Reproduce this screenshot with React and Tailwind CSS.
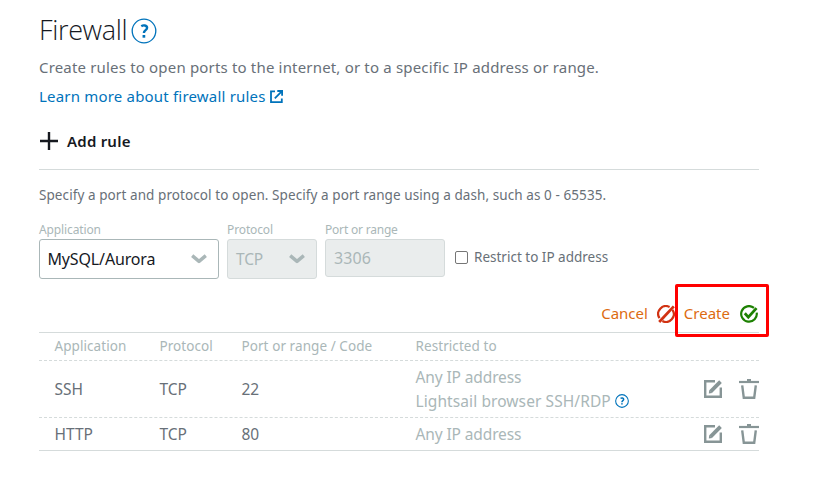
import React from "react";

function HelpIcon({ size, stroke, mark }) {
  return (
    <svg width={size} height={size} viewBox="0 0 26 26" fill="none" stroke="#0073bb" className="shrink-0">
      <circle cx="13" cy="13" r="11.8" strokeWidth={stroke} />
      <path d="M10.3 8.2c1.8-1.2 5.8-1.2 5.8 1.6 0 2.5-3.2 2.3-3.2 5.3" strokeWidth={mark} />
      <path d="M12.9 17v2.7" strokeWidth={mark + 0.3} />
    </svg>
  );
}

function ExternalIcon() {
  return (
    <svg width="13" height="13" viewBox="0 0 13 13" fill="none" stroke="#0073bb" strokeWidth="1.8" className="shrink-0">
      <path d="M5 1.4H1v10.7h10.8V8.5" />
      <path d="M4.8 8.3 11.5 1.6M7.3 1h4.8v4.8" />
    </svg>
  );
}

function Chevron() {
  return (
    <svg width="16" height="10" viewBox="0 0 16 10" fill="none" stroke="#aab7b8" strokeWidth="3.4" strokeLinejoin="round" className="shrink-0">
      <path d="M1.2 1.6 8 7.4l6.8-5.8" />
    </svg>
  );
}

function CancelIcon() {
  return (
    <svg width="18" height="18" viewBox="0 0 18 18" fill="none" stroke="#d13212" strokeWidth="2.2" className="shrink-0">
      <path d="M12.6 2A7.8 7.8 0 0 0 2.5 13.2M5.4 16A7.8 7.8 0 0 0 15.5 4.8" />
      <path d="M2.2 17 16.8 1.4" strokeWidth="2.8" />
    </svg>
  );
}

function CheckIcon() {
  return (
    <svg width="18" height="18" viewBox="0 0 18 18" fill="none" stroke="#1d8102" className="shrink-0">
      <path d="M14 2.9A7.8 7.8 0 1 0 16.7 7.6" strokeWidth="2.2" />
      <path d="m4.8 8.3 3.5 3.8 8.2-9" strokeWidth="2.8" />
    </svg>
  );
}

function EditIcon() {
  return (
    <svg width="18" height="18" viewBox="0 0 18 18" fill="none" stroke="#879596" className="shrink-0">
      <path d="M11 1.2H1.2v15.6h15.6V7.5" strokeWidth="2.4" />
      <path d="m6.6 11.6 9.9-9.9" strokeWidth="3.8" />
      <path d="m4.8 13.5.5-3.4 2.9 2.9z" fill="#879596" stroke="none" />
    </svg>
  );
}

function TrashIcon() {
  return (
    <svg width="20" height="20" viewBox="0 0 20 20" fill="none" stroke="#879596" className="shrink-0">
      <path d="M0 3h20" strokeWidth="2.2" />
      <path d="M8 1h4" strokeWidth="2" />
      <path d="M3.2 6.3 4.8 18.8h10.4l1.6-12.5" strokeWidth="2.4" />
    </svg>
  );
}

const COLS = "grid grid-cols-[105px_82px_174px_1fr]";

function Cell({ children }) {
  return <div className="flex items-center pl-[15.5px]">{children}</div>;
}

function Rule({ app, port, height, border, children }) {
  return (
    <div className={`${COLS} ${height} ${border} border-[#d5dbdb] text-[15.5px] text-[#687078]`}>
      <div className="flex items-center pt-0.5 pl-[15.5px]">{app}</div>
      <div className="flex items-center pt-0.5 pl-[15.5px]">TCP</div>
      <div className="flex items-center pt-0.5 pl-[15.5px]">{port}</div>
      <div className="flex items-center justify-between pl-[15.5px]">
        <div className="text-[15.5px] leading-6 text-[#aab7b8]">{children}</div>
        <div className="flex items-center gap-[17px]">
          <EditIcon />
          <TrashIcon />
        </div>
      </div>
    </div>
  );
}

export default function App() {
  return (
    <main className="h-[481px] w-[818px] overflow-hidden bg-white pl-[39px] font-['Noto_Sans',sans-serif] whitespace-nowrap text-[#687078]">
      <div className="w-[720px]">
        <header className="flex h-[54px] items-center gap-1 pt-[7px]">
          <h1 className="font-['Open_Sans','Noto_Sans',sans-serif] text-[27px] font-light tracking-[-0.35px] text-[#16191f]">Firewall</h1>
          <HelpIcon size={26} stroke={1.3} mark={2.4} />
        </header>
        <p className="h-7 text-[15px] leading-[27px] tracking-[0.175px]">Create rules to open ports to the internet, or to a specific IP address or range.</p>
        <a className="flex h-7 items-center gap-1 text-[15px] tracking-[0.19px] text-[#0073bb]">
          Learn more about firewall rules
          <ExternalIcon />
        </a>
        <button className="flex h-[59px] items-center gap-2 pt-[3px] text-[15px] font-semibold tracking-[0.22px] text-[#16191f]">
          <svg width="20" height="20" viewBox="0 0 20 20" stroke="#16191f" strokeWidth="2.4">
            <path d="M1 10h18M10 1v18" />
          </svg>
          Add rule
        </button>
        <section className="border-t border-[#d5dbdb]">
          <p className="h-[52px] text-[13.5px] leading-[51px] tracking-[0.08px]">Specify a port and protocol to open. Specify a port range using a dash, such as 0 - 65535.</p>
          <div className="flex h-[75px] gap-2">
            <label className="w-[180px] text-[12px] leading-[17px] tracking-[-0.12px] text-[#aab7b8]">
              <div className="-mt-px mb-px">Application</div>
              <div className="flex h-10 items-center justify-between rounded-[3px] border border-[#aab7b8] pr-[11px] pl-[7.5px] text-[16px] tracking-[-0.15px] text-[#16191f]">
                MySQL/Aurora
                <Chevron />
              </div>
            </label>
            <label className="w-[90px] text-[12px] leading-[17px] tracking-[-0.12px] text-[#aab7b8]">
              <div className="-mt-px mb-px">Protocol</div>
              <div className="flex h-10 items-center justify-between rounded-[3px] border border-[#d5dbdb] bg-[#eaeded] pr-[11px] pl-2 text-[15.5px]">
                TCP
                <Chevron />
              </div>
            </label>
            <label className="w-[120px] text-[12px] leading-[17px] tracking-[-0.2px] text-[#aab7b8]">
              <div className="-mt-px mb-px">Port or range</div>
              <div className="flex h-[38px] items-center rounded-[3px] border border-[#d5dbdb] bg-[#eaeded] pl-2 text-[16px] tracking-[0.1px]">3306</div>
            </label>
            <label className="flex h-[70px] items-center gap-[6px] pl-0.5 text-[13.5px]">
              <span className="h-[13px] w-[13px] rounded-[2px] border border-[#767676]" />
              Restrict to IP address
            </label>
          </div>
          <div className="flex h-[35px] items-center justify-end gap-[9px] pb-0.5 text-[15px] text-[#dd6b10]">
            <button className="flex items-center gap-[9px]">
              Cancel
              <CancelIcon />
            </button>
            <div className="relative">
              <button className="flex items-center gap-[10px] pr-px">
                Create
                <CheckIcon />
              </button>
              <div className="absolute -top-[18px] -left-[9px] h-[53px] w-[94px] rounded-[2px] border-3 border-[#ff0000]" />
            </div>
          </div>
        </section>
        <section className="border-y border-[#d5dbdb]">
          <div className={`${COLS} h-[28px] border-b border-dashed border-[#d5dbdb] text-[13.5px] tracking-[0.07px] text-[#aab7b8]`}>
            <Cell>Application</Cell>
            <Cell>Protocol</Cell>
            <Cell>Port or range / Code</Cell>
            <Cell>Restricted to</Cell>
          </div>
          <Rule app="SSH" port="22" height="h-[57px]" border="border-b border-dashed">
            <div className="tracking-[-0.12px]">Any IP address</div>
            <div className="flex items-center gap-1 tracking-[0.09px]">
              Lightsail browser SSH/RDP
              <HelpIcon size={14} stroke={2} mark={2.8} />
            </div>
          </Rule>
          <Rule app="HTTP" port="80" height="h-[32px]" border="">
            <div className="tracking-[-0.12px]">Any IP address</div>
          </Rule>
        </section>
      </div>
    </main>
  );
}
